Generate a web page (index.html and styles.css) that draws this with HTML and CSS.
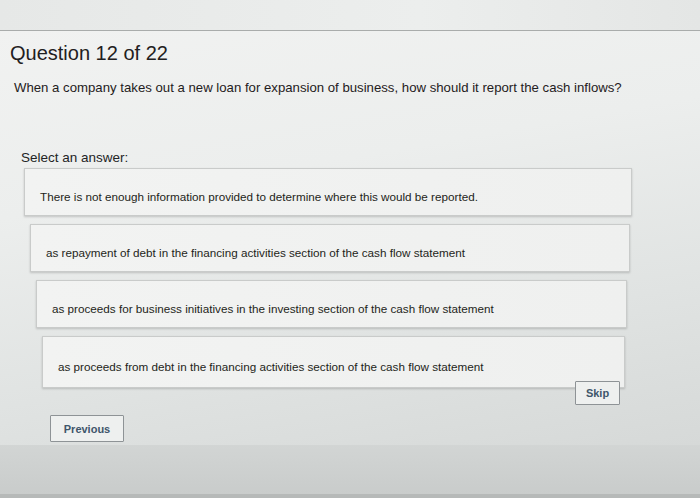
FILE: index.html
```html
<!DOCTYPE html>
<html>
<head>
<meta charset="utf-8">
<link rel="stylesheet" href="styles.css">
</head>
<body>
<div class="top"></div>
<main class="card">
  <h1 class="title">Question 12 of 22</h1>
  <p class="question">When a company takes out a new loan for expansion of business, how should it report the cash inflows?</p>
  <p class="select">Select an answer:</p>
  <div class="options">
    <div class="option o1">There is not enough information provided to determine where this would be reported.</div>
    <div class="option o2">as repayment of debt in the financing activities section of the cash flow statement</div>
    <div class="option o3">as proceeds for business initiatives in the investing section of the cash flow statement</div>
    <div class="option o4">as proceeds from debt in the financing activities section of the cash flow statement</div>
  </div>
  <div class="skiprow"><button class="btn skip">Skip</button></div>
  <div class="prevrow"><button class="btn prev">Previous</button></div>
</main>
<div class="bottom"></div>
</body>
</html>
```
FILE: styles.css
```css
html, body {
  margin: 0;
  padding: 0;
  width: 700px;
  height: 498px;
  overflow: hidden;
  font-family: "Liberation Sans", Arial, sans-serif;
  color: #232425;
  background: #d5d8d7;
}
.top {
  height: 30px;
  background: linear-gradient(90deg, #e6e8e7, #eceeed 60%, #e4e6e5);
  border-bottom: 1px solid #a9acab;
}
.card {
  height: 414px;
  box-sizing: border-box;
  padding: 10px 0 0 0;
  background: linear-gradient(170deg, #f1f2f1 0%, #eceeed 35%, #e0e3e2 70%, #d6d9d8 100%);
}
.title {
  margin: 0 0 0 10px;
  font-size: 20px;
  font-weight: normal;
  line-height: 24px;
  color: #1f2021;
}
.question {
  margin: 15px 0 0 14px;
  font-size: 13.2px;
  line-height: 16px;
  color: #1f2021;
}
.select {
  margin: 54px 0 0 21px;
  font-size: 13.5px;
  line-height: 16px;
}
.options {
  display: flex;
  flex-direction: column;
  gap: 8px;
  margin-top: 2px;
}
.option {
  box-sizing: border-box;
  height: 48px;
  display: flex;
  align-items: center;
  padding: 8px 14px 0 15px;
  background: linear-gradient(90deg, #f2f3f2, #eff0ef);
  border: 1px solid #c9cbca;
  box-shadow: 0 1px 2px rgba(0,0,0,0.18);
  font-size: 11.7px;
  color: #1e1f20;
  white-space: nowrap;
}
.o1 { margin: 0 68px 0 24px; }
.o2 { margin: 0 70px 0 30px; }
.o3 { margin: 0 73px 0 36px; }
.o4 { margin: 0 75px 0 42px; height: 52px; }
.skiprow {
  display: flex;
  justify-content: flex-end;
  padding-right: 80px;
  margin-top: -7px;
}
.prevrow {
  display: flex;
  padding-left: 50px;
  margin-top: 10px;
}
.btn {
  font-family: "Liberation Sans", Arial, sans-serif;
  font-weight: bold;
  font-size: 11px;
  color: #3f566b;
  background: #eef0ef;
  border: 1px solid #8e9396;
  border-radius: 1px;
  padding: 0;
}
.skip { width: 45px; height: 24px; }
.prev { width: 74px; height: 27px; }
.bottom {
  height: 53px;
  background: linear-gradient(180deg, #d2d5d4, #c9cccb);
  border-bottom: 4px solid #b6b9b8;
  box-sizing: border-box;
}
```
